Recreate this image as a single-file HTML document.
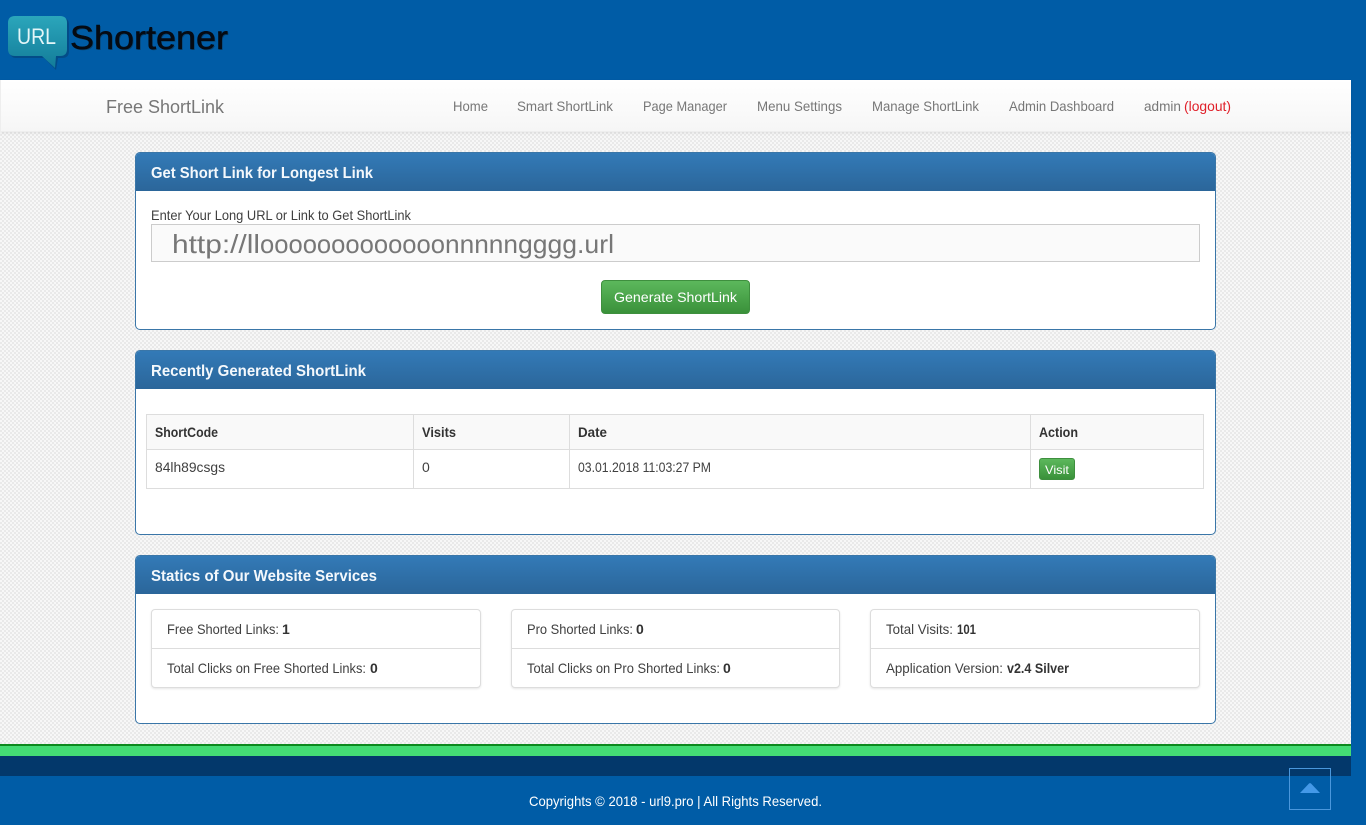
<!DOCTYPE html>
<html><head><meta charset="utf-8"><title>Free ShortLink</title>
<style>
html,body{margin:0;padding:0;width:1366px;height:825px;overflow:hidden;background:#005ca6;font-family:"Liberation Sans",sans-serif}
div{position:absolute;box-sizing:border-box}
.panel{left:135px;width:1081px;background:#fff;border:1px solid #3a76a8;border-radius:5px}
.head{left:0;top:0;right:0;height:38px;background:linear-gradient(#337ab7,#2b669a);border-radius:4px 4px 0 0}
.list{top:609px;height:79px;background:#fff;border:1px solid #ddd;border-radius:4px;box-shadow:0 1px 2px rgba(0,0,0,.1)}
.list i{position:absolute;left:0;right:0;top:38px;height:1px;background:#ddd}
.v{top:414px;width:1px;height:75px;background:#ddd}
.btn{background:linear-gradient(#5cb85c,#3a913a);border:1px solid #3e8f3e;border-radius:4px}
svg{position:absolute;left:0;top:0}
text{font-family:"Liberation Sans",sans-serif;font-size:14px;fill:#404040}
.nav{fill:#777}.h{font-size:16px;font-weight:bold;fill:#f4f8fc}.b{font-weight:bold;fill:#333}.th{font-weight:bold;fill:#333}
</style></head><body>
<div style="left:0;top:0;width:1351px;height:80px;background:#005ca6"></div>
<div style="left:0;top:132px;width:1351px;height:612px;background:repeating-conic-gradient(#e9e9e9 0 25%,#f7f7f7 0 50%) 0 0/4px 4px"></div>
<div style="left:0;top:80px;width:1351px;height:52px;background:linear-gradient(#fff,#f6f6f6);border:1px solid #eee;border-width:0 0 1px 1px;box-shadow:0 1px 3px rgba(0,0,0,.08)"></div>

<div class="panel" style="top:152px;height:178px"><div class="head"></div></div>
<div style="left:151px;top:224px;width:1049px;height:38px;background:#fafafa;border:1px solid #ccc"></div>
<div class="btn" style="left:601px;top:280px;width:149px;height:34px"></div>

<div class="panel" style="top:350px;height:185px"><div class="head"></div></div>
<div style="left:146px;top:414px;width:1058px;height:75px;border:1px solid #ddd;background:linear-gradient(#f9f9f9 0,#f9f9f9 34px,#ddd 34px,#ddd 35px,#fff 35px)"></div>
<div class="v" style="left:413px"></div><div class="v" style="left:569px"></div><div class="v" style="left:1030px"></div>
<div class="btn" style="left:1039px;top:458px;width:36px;height:22px;border-radius:3px"></div>

<div class="panel" style="top:555px;height:169px"><div class="head"></div></div>
<div class="list" style="left:151px;width:330px"><i></i></div>
<div class="list" style="left:511px;width:329px"><i></i></div>
<div class="list" style="left:870px;width:330px"><i></i></div>

<div style="left:0;top:744px;width:1351px;height:2px;background:#0c8a1e"></div>
<div style="left:0;top:746px;width:1351px;height:10px;background:#44dc74"></div>
<div style="left:0;top:756px;width:1351px;height:20px;background:#03386b"></div>
<div style="left:1289px;top:768px;width:42px;height:42px;border:1px solid #4a97dc"></div>

<svg width="1366" height="825" viewBox="0 0 1366 825">
<defs><linearGradient id="g" x1="0" y1="0" x2="0" y2="1"><stop offset="0" stop-color="#2ba6bb"/><stop offset="1" stop-color="#137c99"/></linearGradient></defs>
<path d="M16 18H63Q69 18 69 25V51Q69 58 62 58H58L56 70L44 58H16Q10 58 10 51V25Q10 18 16 18Z" fill="#06406f" opacity=".55"/>
<path d="M15 16H60Q67 16 67 23V49Q67 56 60 56H56L55 68L42 56H15Q8 56 8 49V23Q8 16 15 16Z" fill="url(#g)"/>
<text x="17" y="44" textLength="39" lengthAdjust="spacingAndGlyphs" style="font-size:22px;fill:#e4f6f8">URL</text>
<text x="71" y="50" textLength="158" lengthAdjust="spacingAndGlyphs" style="font-size:33px;fill:#0c3a5c;opacity:.7">Shortener</text>
<text x="70" y="49" textLength="158" lengthAdjust="spacingAndGlyphs" style="font-size:33px;fill:#050a12;stroke:#050a12;stroke-width:.5">Shortener</text>

<text x="106" y="113" textLength="118" lengthAdjust="spacingAndGlyphs" style="font-size:18px;fill:#777">Free ShortLink</text>
<text class="nav" x="453" y="111" textLength="35" lengthAdjust="spacingAndGlyphs">Home</text>
<text class="nav" x="517" y="111" textLength="96" lengthAdjust="spacingAndGlyphs">Smart ShortLink</text>
<text class="nav" x="643" y="111" textLength="84" lengthAdjust="spacingAndGlyphs">Page Manager</text>
<text class="nav" x="757" y="111" textLength="85" lengthAdjust="spacingAndGlyphs">Menu Settings</text>
<text class="nav" x="872" y="111" textLength="107" lengthAdjust="spacingAndGlyphs">Manage ShortLink</text>
<text class="nav" x="1009" y="111" textLength="105" lengthAdjust="spacingAndGlyphs">Admin Dashboard</text>
<text class="nav" x="1144" y="111" textLength="37" lengthAdjust="spacingAndGlyphs">admin</text>
<text x="1184" y="111" textLength="47" lengthAdjust="spacingAndGlyphs" style="fill:#e0202a">(logout)</text>

<text class="h" x="151" y="178" textLength="222" lengthAdjust="spacingAndGlyphs">Get Short Link for Longest Link</text>
<text x="151" y="220" textLength="260" lengthAdjust="spacingAndGlyphs">Enter Your Long URL or Link to Get ShortLink</text>
<text x="172" y="253" textLength="88" lengthAdjust="spacingAndGlyphs" style="font-size:26px;fill:#777">http://ll</text>
<text x="260" y="253" textLength="185" lengthAdjust="spacingAndGlyphs" style="font-size:26px;fill:#777">ooooooooooooo</text>
<text x="445" y="253" textLength="73" lengthAdjust="spacingAndGlyphs" style="font-size:26px;fill:#777">nnnnn</text>
<text x="518" y="253" textLength="59" lengthAdjust="spacingAndGlyphs" style="font-size:26px;fill:#777">gggg</text>
<text x="577" y="253" textLength="37" lengthAdjust="spacingAndGlyphs" style="font-size:26px;fill:#777">.url</text>
<text x="614" y="302" textLength="123" lengthAdjust="spacingAndGlyphs" style="fill:#fff">Generate ShortLink</text>

<text class="h" x="151" y="376" textLength="215" lengthAdjust="spacingAndGlyphs">Recently Generated ShortLink</text>
<text class="th" x="155" y="437" textLength="63" lengthAdjust="spacingAndGlyphs">ShortCode</text>
<text class="th" x="422" y="437" textLength="34" lengthAdjust="spacingAndGlyphs">Visits</text>
<text class="th" x="578" y="437" textLength="29" lengthAdjust="spacingAndGlyphs">Date</text>
<text class="th" x="1039" y="437" textLength="39" lengthAdjust="spacingAndGlyphs">Action</text>
<text x="155" y="472" textLength="70" lengthAdjust="spacingAndGlyphs">84lh89csgs</text>
<text x="422" y="472">0</text>
<text x="578" y="472" textLength="133" lengthAdjust="spacingAndGlyphs">03.01.2018 11:03:27 PM</text>
<text x="1045" y="474" textLength="24" lengthAdjust="spacingAndGlyphs" style="font-size:12px;fill:#fff">Visit</text>

<text class="h" x="151" y="581" textLength="226" lengthAdjust="spacingAndGlyphs">Statics of Our Website Services</text>
<text x="167" y="634" textLength="112" lengthAdjust="spacingAndGlyphs">Free Shorted Links:</text><text class="b" x="282" y="634" textLength="6">1</text>
<text x="167" y="673" textLength="199" lengthAdjust="spacingAndGlyphs">Total Clicks on Free Shorted Links:</text><text class="b" x="370" y="673" textLength="8">0</text>
<text x="527" y="634" textLength="106" lengthAdjust="spacingAndGlyphs">Pro Shorted Links:</text><text class="b" x="636" y="634" textLength="8">0</text>
<text x="527" y="673" textLength="193" lengthAdjust="spacingAndGlyphs">Total Clicks on Pro Shorted Links:</text><text class="b" x="723" y="673" textLength="8">0</text>
<text x="886" y="634" textLength="67" lengthAdjust="spacingAndGlyphs">Total Visits:</text><text class="b" x="957" y="634" textLength="19" lengthAdjust="spacingAndGlyphs">101</text>
<text x="886" y="673" textLength="117" lengthAdjust="spacingAndGlyphs">Application Version:</text><text class="b" x="1007" y="673" textLength="62" lengthAdjust="spacingAndGlyphs">v2.4 Silver</text>

<text x="529" y="806" textLength="293" lengthAdjust="spacingAndGlyphs" style="fill:#fff">Copyrights © 2018 - url9.pro | All Rights Reserved.</text>
<path d="M1300 793L1309 783.500Q1310 782.800 1311 783.500L1320 793Z" fill="#4499e8"/>
</svg>
</body></html>
